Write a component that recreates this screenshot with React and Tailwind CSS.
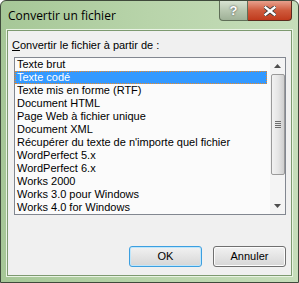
const items = [
  "Texte brut",
  "Texte codé",
  "Texte mis en forme (RTF)",
  "Document HTML",
  "Page Web à fichier unique",
  "Document XML",
  "Récupérer du texte de n'importe quel fichier",
  "WordPerfect 5.x",
  "WordPerfect 6.x",
  "Works 2000",
  "Works 3.0 pour Windows",
  "Works 4.0 for Windows",
];

const font = { fontFamily: "Tahoma, 'Liberation Sans', Arial, sans-serif" };

function Scrollbar() {
  return (
    <div className="flex h-full w-[15px] flex-col items-center bg-[#f4f4f4]">
      <div className="flex h-[16px] w-full items-center justify-center">
        <svg width="7" height="4" viewBox="0 0 7 4">
          <path d="M0 4 L3.5 0 L7 4 Z" fill="#4d4d4d" />
        </svg>
      </div>
      <div className="flex h-[101px] w-[14px] items-center justify-center rounded-[2px] border border-[#9a9a9a] bg-gradient-to-r from-[#f2f2f2] via-[#e6e6e6] to-[#cfcfcf]">
        <div className="flex flex-col gap-[1px]">
          <div className="h-px w-[6px] bg-[#6d6d6d]" />
          <div className="h-px w-[6px] bg-[#6d6d6d]" />
          <div className="h-px w-[6px] bg-[#6d6d6d]" />
          <div className="h-px w-[6px] bg-[#6d6d6d]" />
        </div>
      </div>
      <div className="flex-1" />
      <div className="flex h-[16px] w-full items-center justify-center">
        <svg width="7" height="4" viewBox="0 0 7 4">
          <path d="M0 0 L3.5 4 L7 0 Z" fill="#4d4d4d" />
        </svg>
      </div>
    </div>
  );
}

function DialogButton({ label, focused }) {
  return (
    <div
      className={
        focused
          ? "flex h-[21px] w-[73px] items-center justify-center rounded-[3px] border border-[#3c9fe0] bg-gradient-to-b from-[#f2f2f2] to-[#d6d6d6] text-[11px] text-black shadow-[inset_0_0_0_1px_#bfe6fb]"
          : "flex h-[21px] w-[73px] items-center justify-center rounded-[3px] border border-[#707070] bg-gradient-to-b from-[#f2f2f2] to-[#d6d6d6] text-[11px] text-black shadow-[inset_0_0_0_1px_#fcfcfc]"
      }
      style={font}
    >
      {label}
    </div>
  );
}

export default function App() {
  return (
    <div className="flex h-[283px] w-[299px] flex-col rounded-t-[6px] border border-[#3f4a3b] bg-gradient-to-r from-[#a6c797] via-[#b8d4aa] to-[#c6ddba]">
      <div className="flex h-[29px] items-start justify-between">
        <div
          className="pl-[7px] pt-[6px] text-[12px] text-black"
          style={{ fontFamily: "'Segoe UI', 'Open Sans', 'Noto Sans', sans-serif" }}
        >
          Convertir un fichier
        </div>
        <div className="mr-[6px] flex">
          <div className="flex h-[20px] w-[29px] items-center justify-center rounded-bl-[4px] border border-t-0 border-[#5f6e58] bg-gradient-to-b from-[#d8e3d2] via-[#b8c7b0] to-[#9fb197]">
            <span className="text-[13px] font-bold leading-none text-white [text-shadow:0_0_2px_#333]" style={font}>
              ?
            </span>
          </div>
          <div className="flex h-[20px] w-[44px] items-center justify-center rounded-br-[4px] border border-l-0 border-t-0 border-[#5a2a1e] bg-gradient-to-b from-[#e7a08d] via-[#cf5a3c] to-[#c03a1c]">
            <svg width="12" height="10" viewBox="0 0 12 10">
              <path d="M1 1 L11 9 M11 1 L1 9" stroke="#3a3a3a" strokeWidth="4" strokeLinecap="square" />
              <path d="M1.5 1.5 L10.5 8.5 M10.5 1.5 L1.5 8.5" stroke="#ffffff" strokeWidth="2.4" strokeLinecap="square" />
            </svg>
          </div>
        </div>
      </div>
      <div className="mx-[6px] mb-[6px] flex flex-1 flex-col border border-[#7d9a70] bg-[#f0f0f0] shadow-[0_0_0_1px_#e9f3e4]">
        <div className="pl-[4px] pt-[8px] text-[11px] leading-[13px] text-black" style={font}>
          <span className="underline">C</span>onvertir le fichier à partir de :
        </div>
        <div className="ml-[6px] mt-[5px] flex h-[158px] w-[272px] border border-[#828790] bg-[#fbfbfb]">
          <div className="flex flex-1 flex-col text-[11px] text-black" style={font}>
            {items.map((item, i) =>
              i === 1 ? (
                <div
                  key={item}
                  className="mr-[3px] flex h-[13px] items-center border border-dotted border-[#f08a24] bg-[#3399ff] pl-[1px] text-white"
                >
                  {item}
                </div>
              ) : (
                <div key={item} className="flex h-[13px] items-center pl-[2px]">
                  {item}
                </div>
              )
            )}
          </div>
          <Scrollbar />
        </div>
        <div className="mt-[31px] flex justify-end gap-[11px] pr-[5px]">
          <DialogButton label="OK" focused />
          <DialogButton label="Annuler" />
        </div>
      </div>
    </div>
  );
}
